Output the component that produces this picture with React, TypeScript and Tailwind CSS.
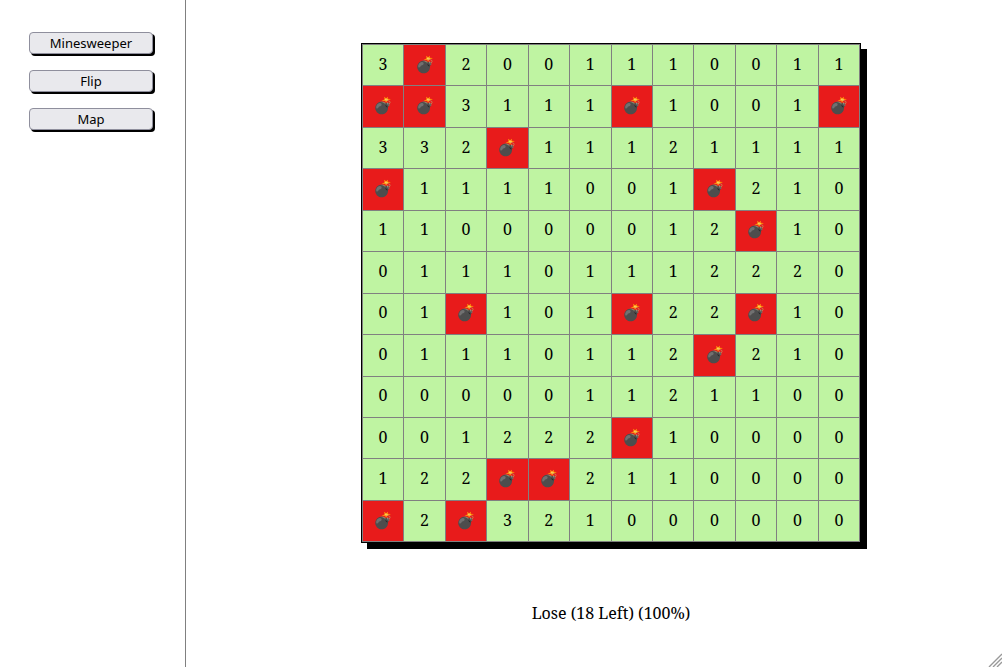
import React, { useState } from "react";

const BOARD = [
  "3*2001110011",
  "**3111*1001*",
  "332*11121111",
  "*1111001*210",
  "110000012*10",
  "011101112220",
  "01*101*22*10",
  "01110112*210",
  "000001121100",
  "001222*10000",
  "122**2110000",
  "*2*321000000",
];

const GAMES = ["Minesweeper", "Flip", "Map"];

export default function App() {
  const [game, setGame] = useState(GAMES[0]);
  return (
    <div className="flex h-screen bg-white text-black">
      <nav className="flex w-[186px] shrink-0 flex-col gap-4 border-r border-[#808080] py-8 pr-8 pl-[29px] font-['Noto_Sans',sans-serif]">
        {GAMES.map((name) => (
          <button
            key={name}
            type="button"
            aria-pressed={game === name}
            onClick={() => setGame(name)}
            className="h-[22px] rounded-sm border border-[#8f8f9d] bg-[#e9e9ed] text-[13px] leading-5 shadow-[2px_2px_black]"
          >
            {name}
          </button>
        ))}
      </nav>
      <main className="relative flex min-w-0 flex-1 flex-col items-center pl-[34px] pt-[43px] font-['Noto_Serif','Liberation_Serif',serif] text-base">
        <div className="grid aspect-square h-[75vh] grid-cols-12 grid-rows-12 gap-px border border-black bg-[#808080] p-px shadow-[6px_6px_black]">
          {BOARD.join("").split("").map((cell, i) =>
            cell === "*" ? (
              <button key={i} type="button" aria-label="Bomb" className="flex items-center justify-center bg-[#e81b1b] pb-[3px] leading-6">
                💣
              </button>
            ) : (
              <button key={i} type="button" className="flex items-center justify-center bg-[#bff4a2] pb-[3px] leading-6">
                {cell}
              </button>
            ),
          )}
        </div>
        <p className="mt-[58px] leading-6">Lose (18 Left) (100%)</p>
        <svg viewBox="0 0 14 14" className="absolute right-0 bottom-0 size-3.5" aria-hidden="true">
          <path d="M1 14 L14 1 M5 14 L14 5 M9 14 L14 9" stroke="#999" strokeWidth="1.4" />
        </svg>
      </main>
    </div>
  );
}
